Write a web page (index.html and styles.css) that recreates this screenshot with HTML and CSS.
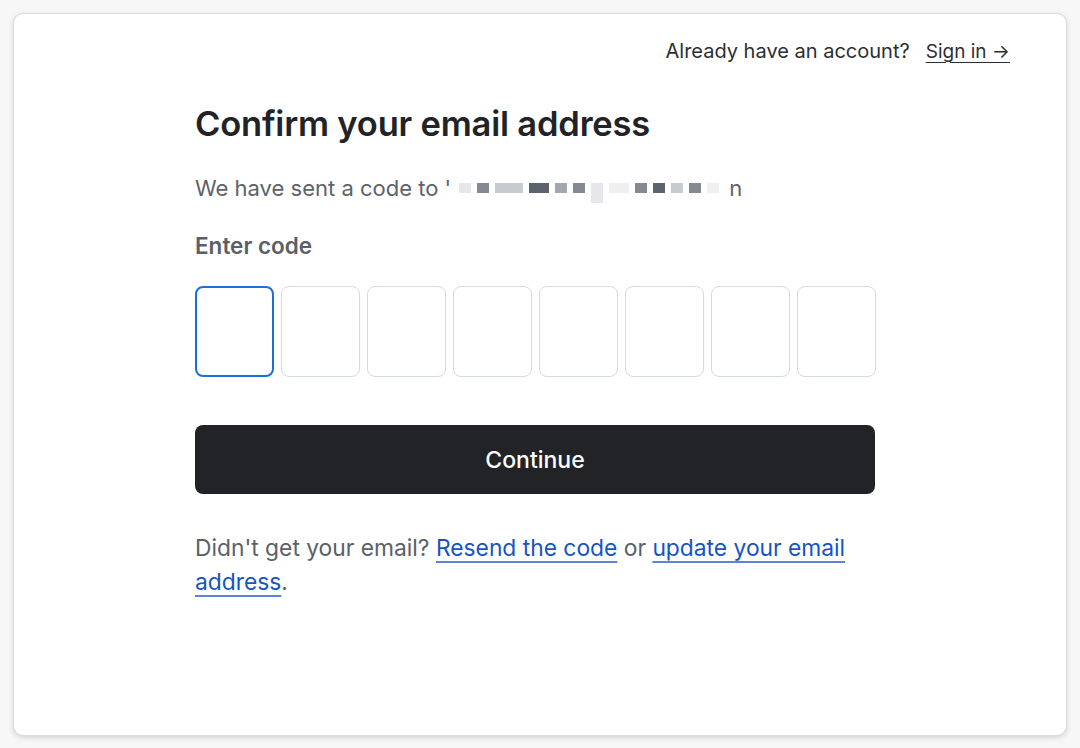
FILE: index.html
```html
<!DOCTYPE html>
<html lang="en">
<head>
<meta charset="utf-8">
<title>Confirm your email address</title>
<link rel="stylesheet" href="styles.css">
</head>
<body>
<div class="card">
  <div class="topbar">
    <span class="already">Already have an account?</span>
    <a class="signin" href="#">Sign in →</a>
  </div>
  <main class="content">
    <h1 class="title">Confirm your email address</h1>
    <p class="sent">We have sent a code to '<span class="redact"><i class="px l1"></i><i class="px d2"></i><i class="px l2 w3"></i><i class="px d1 w2"></i><i class="px d3"></i><i class="px d2"></i><i class="px l1 tall"></i><i class="px l3 w2"></i><i class="px d2"></i><i class="px d1"></i><i class="px l2"></i><i class="px d2"></i><i class="px l3"></i></span>n</p>
    <label class="label">Enter code</label>
    <div class="codes">
      <div class="box active"></div>
      <div class="box"></div>
      <div class="box"></div>
      <div class="box"></div>
      <div class="box"></div>
      <div class="box"></div>
      <div class="box"></div>
      <div class="box"></div>
    </div>
    <button class="continue" type="button">Continue</button>
    <p class="help">Didn't get your email? <a href="#">Resend the code</a> or <a href="#">update your email address</a>.</p>
  </main>
</div>
</body>
</html>
```

FILE: styles.css
```css
* { box-sizing: border-box; }
html, body { margin: 0; background: #f7f7f7; }
body {
  padding: 14px;
  font-family: Inter, "Noto Sans", "Liberation Sans", sans-serif;
  color: #212327;
}
.card {
  height: 721px;
  background: #fff;
  border-radius: 9px;
  box-shadow: 0 0 0 1px #dcdcdc, 0 2px 6px rgba(0,0,0,0.18);
  padding: 23px 56px 0 181px;
}
.topbar {
  display: flex;
  justify-content: flex-end;
  align-items: center;
  gap: 16px;
  font-size: 20px;
  height: 28px;
  color: #2b2f34;
}
.signin {
  color: #2b2f34;
  font-size: 19px;
  text-decoration: underline;
  text-underline-offset: 4px;
  text-decoration-thickness: 1px;
}
.content { width: 680px; margin-top: 38px; }
.title {
  margin: 0;
  font-size: 34.5px;
  font-weight: 600;
  letter-spacing: -0.2px;
  line-height: 42px;
  color: #212327;
}
.sent {
  margin: 28px 0 0;
  font-size: 22px;
  line-height: 30px;
  color: #5d636b;
  display: flex;
  align-items: center;
  white-space: nowrap;
}
.redact { display: inline-flex; align-items: center; margin: 0 4px 0 8px; height: 30px; }
.px { display: inline-block; width: 12px; height: 10px; margin-right: 6px; }
.px.w2 { width: 20px; }
.px.w3 { width: 28px; }
.px.tall { height: 20px; margin-top: 10px; }
.l1 { background: #e6e7ea; }
.l2 { background: #c7cad0; }
.l3 { background: #eeeff1; }
.d1 { background: #5d636d; }
.d2 { background: #848992; }
.d3 { background: #a4a8ae; }
.label {
  display: block;
  margin-top: 28px;
  font-size: 22.5px;
  font-weight: 600;
  line-height: 30px;
  color: #5a6068;
}
.codes {
  display: grid;
  grid-template-columns: repeat(8, 79px);
  gap: 7px;
  margin-top: 25px;
}
.box {
  height: 91px;
  border: 1px solid #d4dae2;
  border-radius: 8px;
  background: #fff;
}
.box.active { border: 2px solid #1a6fe0; }
.continue {
  display: block;
  width: 680px;
  height: 69px;
  margin-top: 48px;
  border: 0;
  border-radius: 8px;
  background: #212327;
  color: #fff;
  font-family: inherit;
  font-size: 23px;
  font-weight: 500;
}
.help {
  margin: 37px 0 0;
  font-size: 22.8px;
  line-height: 34px;
  color: #5a6068;
  width: 670px;
}
.help a {
  color: #1554c3;
  text-decoration: underline;
  text-decoration-color: #5a86d6;
  text-underline-offset: 5px;
  text-decoration-thickness: 2px;
}
```
